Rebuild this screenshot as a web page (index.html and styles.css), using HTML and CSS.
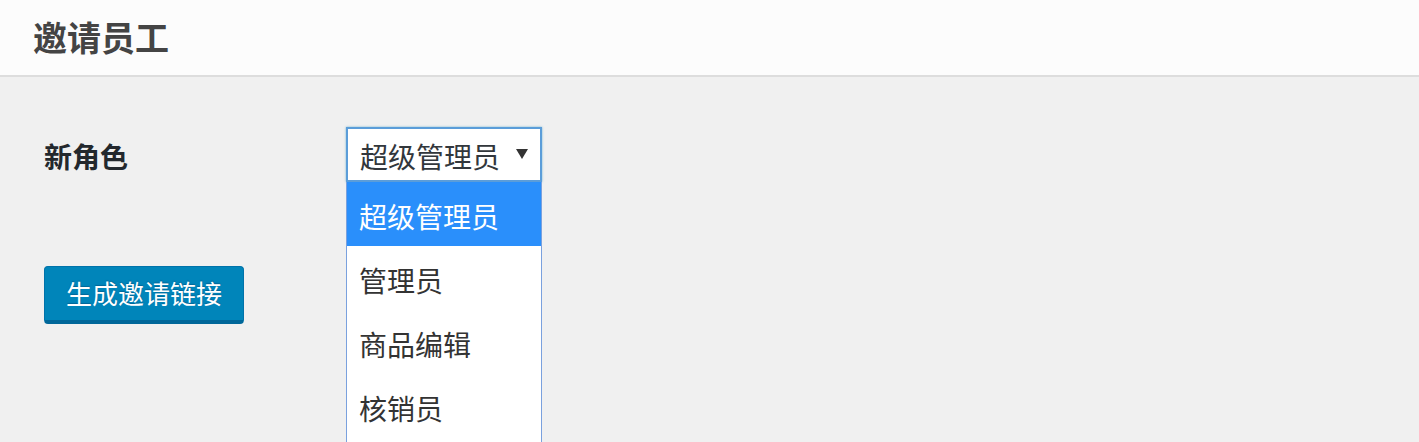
FILE: index.html
```html
<!DOCTYPE html>
<html lang="zh-CN">
<head>
<meta charset="utf-8">
<title>邀请员工</title>
<link rel="stylesheet" href="styles.css">
</head>
<body>
<header class="page-header">
  <h1 class="page-title">邀请员工</h1>
</header>
<main class="content">
  <div class="form-row">
    <label class="form-label">新角色</label>
    <div class="select-wrap">
      <div class="select-box">
        <span class="select-value">超级管理员</span>
        <span class="select-arrow"></span>
      </div>
      <ul class="select-list">
        <li class="option selected">超级管理员</li>
        <li class="option">管理员</li>
        <li class="option">商品编辑</li>
        <li class="option">核销员</li>
      </ul>
    </div>
  </div>
  <button class="btn-primary" type="button">生成邀请链接</button>
</main>
</body>
</html>
```

FILE: styles.css
```css
* { box-sizing: border-box; }

html, body {
  margin: 0;
  padding: 0;
  height: 100%;
  overflow: hidden;
}

body {
  background: #f0f0f0;
  font-family: "Noto Sans CJK SC", "Noto Sans", sans-serif;
  color: #333;
}

.page-header {
  height: 77px;
  background: #fcfcfc;
  border-bottom: 2px solid #dddddd;
  display: flex;
  align-items: center;
  padding-left: 33px;
}

.page-title {
  margin: 0;
  font-size: 34px;
  font-weight: 700;
  color: #444;
  line-height: 1;
  padding-bottom: 1px;
}

.content {
  padding: 50px 0 0 44px;
}

.form-row {
  display: flex;
  align-items: center;
  height: 55px;
}

.form-label {
  width: 302px;
  font-size: 28px;
  font-weight: 700;
  color: #23282d;
  line-height: 1;
  padding-top: 2px;
}

.select-wrap {
  position: relative;
  width: 196px;
}

.select-box {
  height: 55px;
  background: #fff;
  border: 2px solid #5b9dd9;
  box-shadow: 0 0 2px rgba(30, 140, 190, 0.6);
  display: flex;
  align-items: center;
  justify-content: space-between;
  padding: 0 12px 0 12px;
}

.select-value {
  font-size: 28px;
  color: #32373c;
  line-height: 1;
  padding-top: 2px;
}

.select-arrow {
  width: 0;
  height: 0;
  border-left: 6px solid transparent;
  border-right: 6px solid transparent;
  border-top: 10px solid #333;
  margin-top: -2px;
}

.select-list {
  position: absolute;
  top: 55px;
  left: 0;
  width: 196px;
  margin: 0;
  padding: 0 0 40px 0;
  list-style: none;
  background: #fff;
  border: 1px solid #7aa1de;
  border-top: none;
  z-index: 10;
}

.option {
  height: 64px;
  display: flex;
  align-items: center;
  padding-left: 12px;
  padding-top: 4px;
  font-size: 28px;
  color: #333;
  line-height: 1;
}

.option.selected {
  background: #2a8ffb;
  color: #fff;
}

.btn-primary {
  margin-top: 84px;
  width: 200px;
  height: 58px;
  background: #0085ba;
  border: 1px solid #0073aa;
  border-bottom: 4px solid #006799;
  border-radius: 4px;
  color: #fff;
  font-family: "Noto Sans CJK SC", "Noto Sans", sans-serif;
  font-size: 26px;
  line-height: 1;
  padding: 0 0 2px 0;
  text-shadow: 0 -1px 1px #006799;
  cursor: pointer;
}
```
